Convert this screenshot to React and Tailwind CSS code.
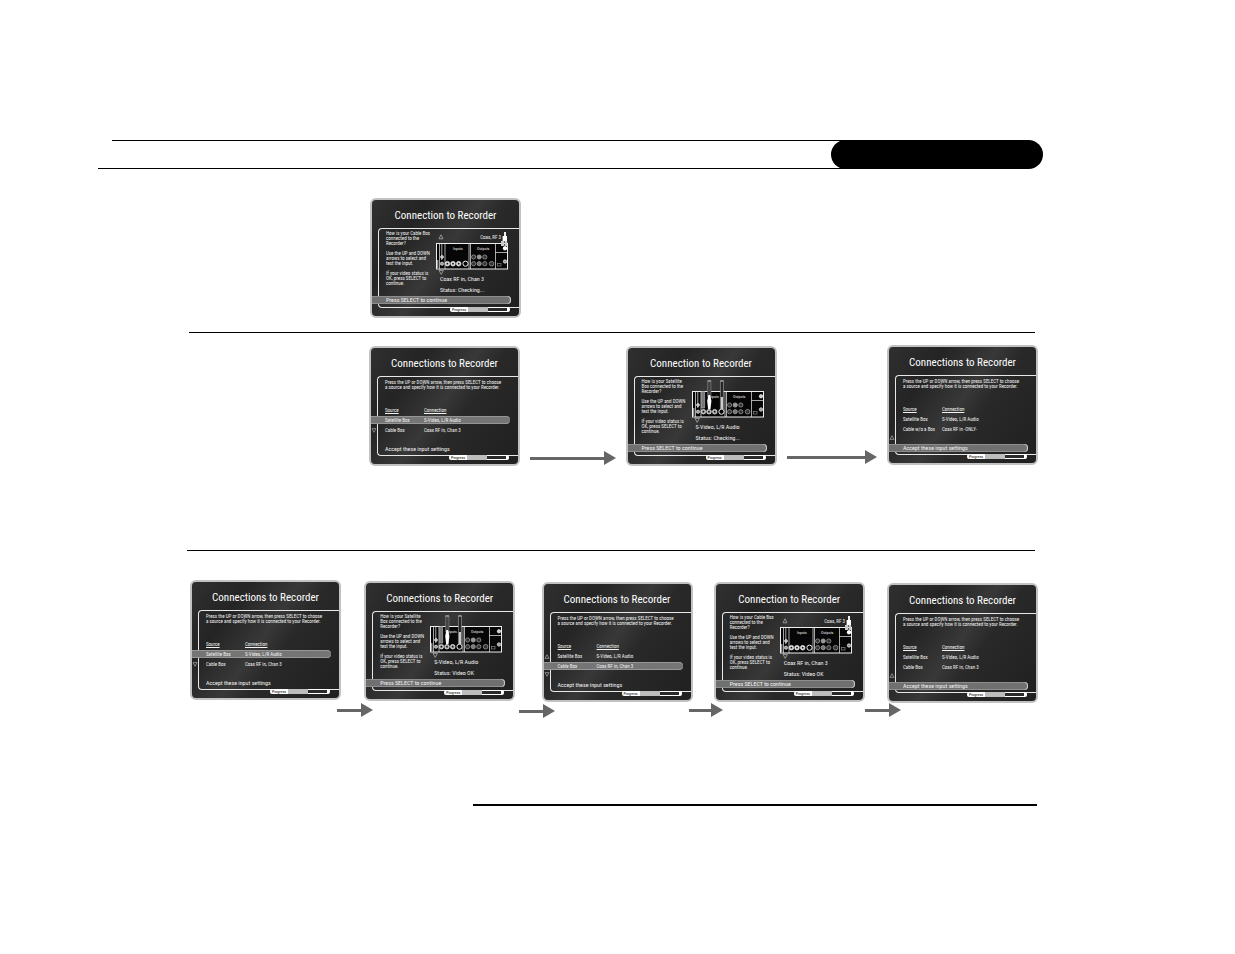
/**
 * App.jsx
 * -------
 * Manual page that shows the "Connection to Recorder" setup screens,
 * one row of screens per kind of TV source.
 */

const ASK_SATELLITE = [
  ['How is your Satellite', 'Box connected to the', 'Recorder?'],
  ['Use the UP and DOWN', 'arrows to select and', 'test the input.'],
  ['If your video status is', 'OK, press SELECT to', 'continue.'],
]

const ASK_CABLE = [
  ['How is your Cable Box', 'connected to the', 'Recorder?'],
  ['Use the UP and DOWN', 'arrows to select and', 'test the input.'],
  ['If your video status is', 'OK, press SELECT to', 'continue.'],
]

const SATELLITE = ['Satellite Box', 'S-Video, L/R Audio']
const CABLE = ['Cable Box', 'Coax RF in, Chan 3']
const CABLE_ONLY = ['Cable w/o a Box', 'Coax RF in -ONLY-']

function Marker({ up }) {
  return (
    <svg viewBox="0 0 6 5" className="block h-[5px] w-[6px]" fill="none" stroke="#aaa" strokeWidth="0.7">
      <path d={up ? 'M3 0.7 5 4.4H1Z' : 'M3 4.3 5 0.6H1Z'} />
    </svg>
  )
}

function Arrow({ className }) {
  return (
    <div className={`flex h-[14px] shrink-0 items-center ${className}`}>
      <div className="h-[3px] flex-1 bg-[#666]" />
      <svg viewBox="0 0 12 14" className="h-[14px] w-3" fill="#666">
        <path d="M0 0 12 7 0 14Z" />
      </svg>
    </div>
  )
}

/* Screen shell: title, outlined frame and progress bar */
function Screen({ title, className = '', children }) {
  return (
    <section
      className={`h-[120px] w-[151px] shrink-0 overflow-hidden rounded-md border-2 border-[#c2c2c2] bg-[linear-gradient(125deg,#303030_0%,#242424_25%,#383838_48%,#292929_60%,#202020_100%)] text-[#f2f2f2] ${className}`}
    >
      <h2 className="h-7 text-center text-[11px] leading-8 whitespace-nowrap text-white">{title}</h2>
      <div className="ml-1.5 h-20 rounded-l-[4px] border-y border-l border-[#e8e8e8]">{children}</div>
      <div className="-mt-px ml-[78px] flex h-[5px] w-[60px] overflow-hidden rounded-[2px] bg-white text-[4px] leading-[5px] text-black">
        <span className="w-[18px] text-center">Progress</span>
        <span className="w-5 bg-[#bdbdbd]" />
        <span className="my-px w-[19px] bg-[#2a2a2a]" />
      </div>
    </section>
  )
}

function ActionBar({ active, children }) {
  return (
    <button
      type="button"
      className={`-ml-[7px] block h-2 w-[139px] rounded-r-full pl-[14px] text-left text-[6px] leading-[8px] ${
        active ? 'bg-[#707070] shadow-[inset_-1px_0_0_#d0d0d0,inset_0_1px_0_#8e8e8e,inset_0_-1px_0_#8e8e8e]' : ''
      }`}
    >
      {children}
    </button>
  )
}

/* Screen with the list of sources */
function SourceScreen({ rows, active, up, down, className }) {
  const mark = (i) => (up === i ? <Marker up /> : down === i ? <Marker /> : null)

  return (
    <Screen title="Connections to Recorder" className={className}>
      <p className="pt-[3px] pl-[7px] text-[5px] leading-[5px] whitespace-nowrap">
        Press the UP or DOWN arrow, then press SELECT to choose
        <br />a source and specify how it is connected to your Recorder.
      </p>
      <table className="mt-[14px] -ml-[7px] w-[139px] table-fixed border-separate border-spacing-x-0 border-spacing-y-0.5 text-left text-[5px] leading-[8px]">
        <thead>
          <tr>
            <td className="w-[14px] p-0" />
            <th className="w-[39px] p-0 font-normal underline">Source</th>
            <th className="p-0 font-normal underline">Connection</th>
          </tr>
        </thead>
        <tbody>
          {rows.map(([source, connection], i) => {
            const tone = active === i ? 'bg-[#757575] shadow-[inset_0_1px_0_#969696,inset_0_-1px_0_#969696]' : ''
            return (
              <tr key={source} className="h-2">
                <td className={`p-0 ${tone}`}>{mark(i)}</td>
                <td className={`p-0 whitespace-nowrap ${tone}`}>{source}</td>
                <td className={`rounded-r-full p-0 whitespace-nowrap ${tone}`}>{connection}</td>
              </tr>
            )
          })}
        </tbody>
      </table>
      <div className="-ml-[7px] h-[9px]">{mark(2)}</div>
      <ActionBar active={active === 2}>Accept these input settings</ActionBar>
    </Screen>
  )
}

/* Back panel of the recorder with the plugged-in cables */
function BackPanel({ coax }) {
  return (
    <svg viewBox="0 0 75 46" className="h-[46px] w-[75px]" fill="none" stroke="#eee" strokeWidth="0.7">
      {coax && <path d="M6 5.8 8 9.8H4Z" stroke="#bbb" />}
      <path d="M4 41.4h4.4L6.2 45.4Z" stroke="#bbb" />
      <rect x="1.5" y="14.5" width="71" height="25.5" fill="#060606" strokeWidth="1" />
      <path d="M4.5 14.5V40M6.8 14.5V31M10 14.5V40M34 14.5V40M35.5 14.5V40M60.5 14.5V40M60.5 23.5H72.5" />
      <path d="M2.7 31v8" stroke="#999" strokeWidth="1.4" />
      <circle cx="7" cy="28" r="1.4" fill="#bbb" />
      <circle cx="7" cy="34.7" r="1.6" fill="#999" />
      <g fill={coax ? '#ddd' : '#aaa'}>
        <circle cx="12.4" cy="34.7" r="2.3" />
        <circle cx="18" cy="34.7" r="2.3" />
        <circle cx="23.7" cy="34.7" r="2.3" />
      </g>
      <g fill="#111" stroke="none">
        <circle cx="12.4" cy="34.7" r="0.9" />
        <circle cx="18" cy="34.7" r="0.9" />
        <circle cx="23.7" cy="34.7" r="0.9" />
      </g>
      <circle cx="30.5" cy="34.7" r="2.6" strokeWidth="1" />
      <g stroke="#aaa" fill="#333">
        <circle cx="38.6" cy="28" r="2.1" />
        <circle cx="44.2" cy="28" r="2.1" fill="#999" />
        <circle cx="49.8" cy="28" r="2.1" />
        <circle cx="38.6" cy="34.7" r="2.1" />
        <circle cx="44.2" cy="34.7" r="2.1" fill="#777" />
        <circle cx="49.8" cy="34.7" r="2.1" />
        <circle cx="56.6" cy="34.7" r="2.3" />
      </g>
      <circle cx="70" cy="19.3" r="1.7" fill="#ccc" />
      <circle cx="70" cy="32.5" r="1.7" fill="#999" />
      <rect x="62.5" y="34.5" width="3.5" height="2.5" stroke="#888" />
      <g fill="#eee" stroke="none" fontSize="4">
        <text x="18" y="20.5">Inputs</text>
        <text x="42" y="20.5">Outputs</text>
        {coax && <text x="66" y="9.8" fontSize="5" textAnchor="end">Coax, RF 3</text>}
      </g>
      {coax ? (
        <g stroke="none">
          <path d="M69 3h2v7h-2z" fill="#eee" />
          <path d="M67.6 7h4.4v5h-4.4z" fill="#fff" />
          <path d="M66 12h3v5h-3zM69.6 12h2.6v5h-2.6z" fill="#ccc" />
          <circle cx="70" cy="19.3" r="2" fill="#fff" />
        </g>
      ) : (
        <g>
          <path d="M10.6 14.5h3V31h-3z" fill="#777" stroke="#aaa" />
          <path d="M16.6 3.8h3.4V20h-3.4z" fill="#444" stroke="#777" />
          <path d="M16.6 4h3.4" />
          <path d="M17.4 18h1.8l1.2 6-.9 8h-2.4l-.9-8z" fill="#fff" stroke="none" />
          <path d="M29.4 3.8h3V32h-3z" fill="#222" stroke="#999" />
          <path d="M29.4 4h3" />
          <path d="M29.8 20h2.2v12h-2.2z" fill="#ccc" stroke="none" />
        </g>
      )}
    </svg>
  )
}

/* Screen that tests one input */
function InputScreen({ title = 'Connection to Recorder', coax, status, className }) {
  return (
    <Screen title={title} className={className}>
      <div className="flex h-[67px]">
        <div className="flex w-[49px] shrink-0 flex-col gap-[5px] pt-[2px] pl-[7px] text-[5px] leading-[5px] whitespace-nowrap">
          {(coax ? ASK_CABLE : ASK_SATELLITE).map((lines) => (
            <p key={lines[0]}>
              {lines.map((line) => (
                <span key={line} className="block">{line}</span>
              ))}
            </p>
          ))}
        </div>
        <div className="pl-[7px]">
          <BackPanel coax={coax} />
          <div className="flex flex-col gap-[5px] pt-px pl-[5px] text-[6px] leading-[6px] whitespace-nowrap">
            <p>{coax ? 'Coax RF in, Chan 3' : 'S-Video, L/R Audio'}</p>
            <p>{status}</p>
          </div>
        </div>
      </div>
      <ActionBar active>Press SELECT to continue</ActionBar>
    </Screen>
  )
}

export default function App() {
  return (
    <main className="min-h-screen bg-white pt-[140px] font-['Roboto_Condensed',Roboto,sans-serif]">
      {/* Chapter tab */}
      <header className="mr-[192px] ml-[98px] flex">
        <div className="flex-1 border-b border-black">
          <div className="ml-3.5 border-t border-black" />
        </div>
        <div className="-ml-3.5 h-[29px] w-[212px] rounded-full bg-black" />
      </header>

      <div className="mr-[197px] ml-[190px] pt-[29px]">
        <div className="ml-[180px]">
          <InputScreen coax status="Status: Checking..." />
        </div>

        <hr className="mt-[14px] mr-[3px] -ml-px border-black" />

        <div className="mt-3 ml-[179px] flex items-start">
          <SourceScreen className="mt-px" rows={[SATELLITE, CABLE]} active={0} down={1} />
          <div className="flex-auto px-2.5 pt-[106px]">
            <Arrow className="min-w-[84px]" />
          </div>
          <InputScreen className="mt-px" status="Status: Checking..." />
          <div className="flex-auto px-2.5 pt-[105px]">
            <Arrow className="min-w-[89px]" />
          </div>
          <SourceScreen rows={[SATELLITE, CABLE_ONLY]} active={2} up={2} />
        </div>

        <hr className="mt-[84px] mr-[3px] -ml-[3px] border-black" />

        <div className="mt-[29px] flex items-start">
          <SourceScreen rows={[SATELLITE, CABLE]} active={0} down={1} />
          <div className="flex w-[23px] flex-auto pt-[123px]">
            <Arrow className="-ml-1 w-9" />
          </div>
          <InputScreen className="mt-px" title="Connections to Recorder" status="Status: Video OK" />
          <div className="flex w-[26px] flex-auto pt-[124px]">
            <Arrow className="ml-1 w-9" />
          </div>
          <SourceScreen className="mt-0.5" rows={[SATELLITE, CABLE]} active={1} up={0} down={2} />
          <div className="flex w-[21px] flex-auto pt-[123px]">
            <Arrow className="-ml-1 w-[34px]" />
          </div>
          <InputScreen className="mt-0.5" coax status="Status: Video OK" />
          <div className="flex w-[22px] flex-auto pt-[123px]">
            <Arrow className="w-9" />
          </div>
          <SourceScreen className="mt-[3px]" rows={[SATELLITE, CABLE]} active={2} up={2} />
        </div>

        <hr className="mt-[86px] mr-px ml-[283px] border-t-2 border-black" />
      </div>
    </main>
  )
}
